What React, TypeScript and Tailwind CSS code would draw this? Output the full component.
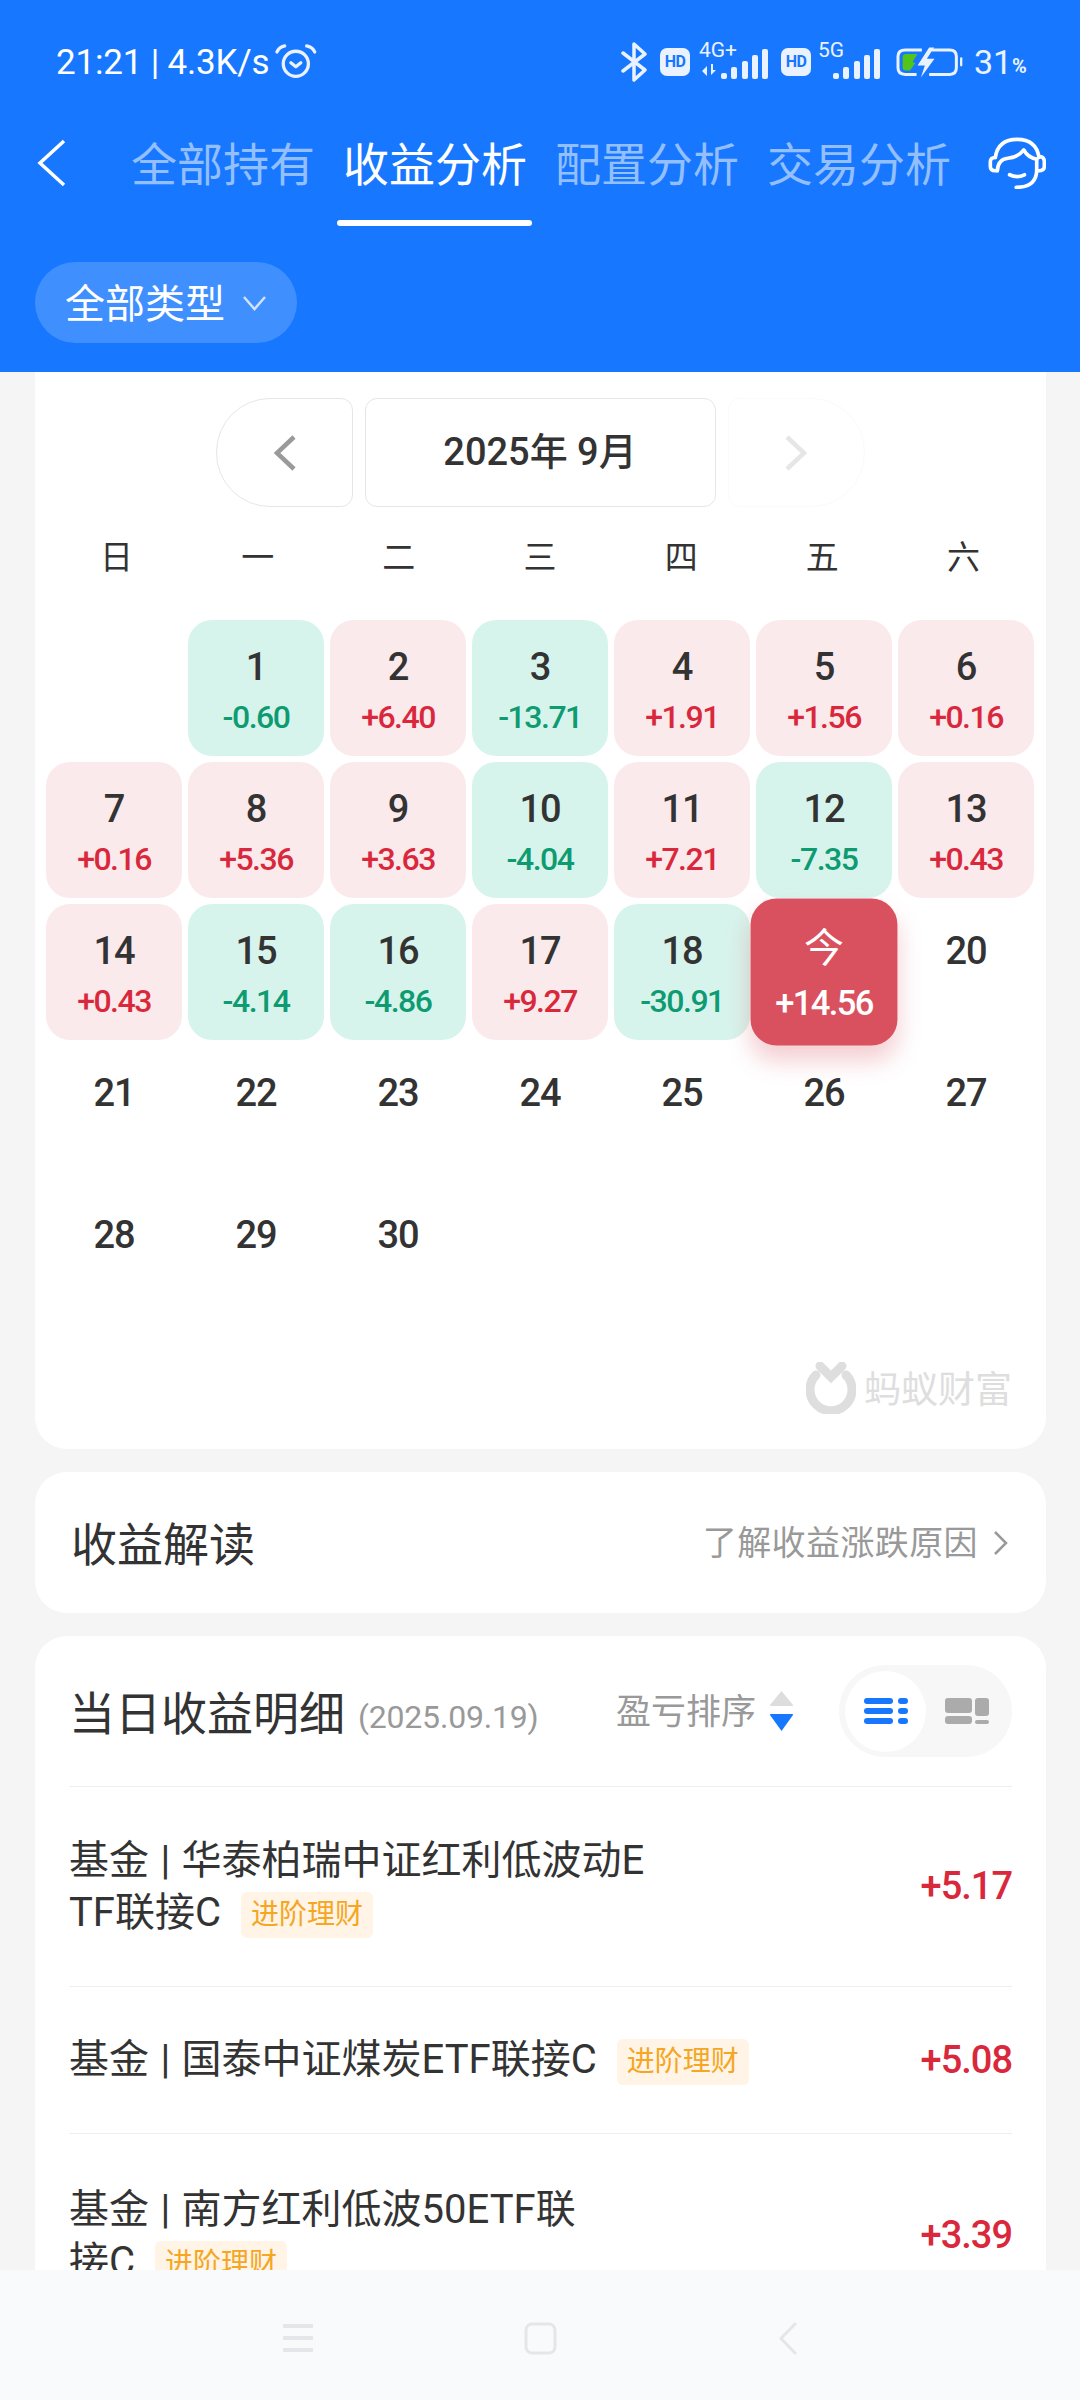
import React from 'react'

type Day = { day: number; value?: string; label?: string }

const days: Day[] = [
  { day: 1, value: '-0.60' },
  { day: 2, value: '+6.40' },
  { day: 3, value: '-13.71' },
  { day: 4, value: '+1.91' },
  { day: 5, value: '+1.56' },
  { day: 6, value: '+0.16' },
  { day: 7, value: '+0.16' },
  { day: 8, value: '+5.36' },
  { day: 9, value: '+3.63' },
  { day: 10, value: '-4.04' },
  { day: 11, value: '+7.21' },
  { day: 12, value: '-7.35' },
  { day: 13, value: '+0.43' },
  { day: 14, value: '+0.43' },
  { day: 15, value: '-4.14' },
  { day: 16, value: '-4.86' },
  { day: 17, value: '+9.27' },
  { day: 18, value: '-30.91' },
  { day: 19, value: '+14.56', label: '今' },
  { day: 20 },
  { day: 21 },
  { day: 22 },
  { day: 23 },
  { day: 24 },
  { day: 25 },
  { day: 26 },
  { day: 27 },
  { day: 28 },
  { day: 29 },
  { day: 30 },
]

function Signal() {
  return (
    <svg width="48" height="32" viewBox="0 0 48 32" fill="#eaf2ff">
      <rect x="0" y="25" width="6" height="6" rx="2" />
      <rect x="10" y="19" width="6" height="12" rx="2" />
      <rect x="21" y="13" width="6" height="18" rx="2" />
      <rect x="31" y="7" width="6" height="24" rx="2" />
      <rect x="41" y="1" width="6" height="30" rx="2" />
    </svg>
  )
}

function HdBadge() {
  return (
    <div className="flex h-[28px] w-[30px] items-center justify-center rounded-[7px] bg-[#eaf2ff] text-[16px] leading-none font-bold tracking-[-0.5px] text-[#1677ff]">
      HD
    </div>
  )
}

function StatusBar() {
  return (
    <div className="flex h-[44px] items-center pr-[55px] pl-[56px] text-white">
      <span className="text-[35px] leading-none tracking-[-0.2px]">21:21 | 4.3K/s</span>
      <svg className="ml-[6px]" width="42" height="37" viewBox="35 28 125 112" fill="none" stroke="#eaf2ff" strokeWidth="10" strokeLinecap="round" strokeLinejoin="round">
        <circle cx="97" cy="88" r="38" />
        <path d="M40 52 Q46 38 63 34 M130 34 Q148 38 154 52" />
        <path d="M82 85 L97 97 L112 85" />
      </svg>
      <svg className="ml-auto" width="26" height="40" viewBox="0 0 26 40" fill="none" stroke="#eaf2ff" strokeWidth="3.5" strokeLinejoin="round" strokeLinecap="round">
        <path d="M2 11 L24 28 L13 38 L13 2 L24 12 L2 29" />
      </svg>
      <div className="ml-[13px]">
        <HdBadge />
      </div>
      <div className="relative ml-[9px] h-[36px] w-[70px]">
        <span className="absolute top-[-5px] left-0 text-[21px] leading-[22px] text-[#eaf2ff]">4G+</span>
        <svg className="absolute bottom-[3px] left-[3px]" width="16" height="13" viewBox="0 0 16 13" fill="#eaf2ff">
          <path d="M0 7 L5 2 V12Z M9 0 V11 L14 6 L11 6 V0Z" />
        </svg>
        <div className="absolute right-0 bottom-0 flex">
          <Signal />
        </div>
      </div>
      <div className="ml-[12px]">
        <HdBadge />
      </div>
      <div className="relative ml-[7px] h-[36px] w-[63px]">
        <span className="absolute top-[-5px] left-0 text-[21px] leading-[22px] text-[#eaf2ff]">5G</span>
        <div className="absolute right-0 bottom-0 flex">
          <Signal />
        </div>
      </div>
      <svg className="ml-[15px]" width="67" height="31" viewBox="50 40 202 92" fill="none">
        <path d="M128 48 H78 Q56 48 56 68 V102 Q56 122 78 122 H112 M157 48 H212 Q232 48 232 68 V102 Q232 122 212 122 H150" stroke="#eaf2ff" strokeWidth="9" />
        <path d="M70 70 Q70 60 80 60 H115 L100 84 L108 88 L92 110 H80 Q70 110 70 100Z" fill="#52c41a" />
        <path d="M150 41 L115 95 H137 L125 131 L166 75 H143 L165 41Z" fill="#eaf2ff" />
        <rect x="243" y="70" width="7" height="28" rx="3.5" fill="#eaf2ff" />
      </svg>
      <span className="ml-[11px] w-[38px] text-[34px] leading-none text-[#eaf2ff]">31</span>
      <span className="mt-[7px] w-[13px] text-[20px] leading-none font-bold tracking-[-1.5px] text-[#eaf2ff]">%</span>
    </div>
  )
}

function HeadsetIcon() {
  return (
    <svg width="58" height="52" viewBox="40 33 175 157" fill="none" stroke="white" strokeWidth="11" strokeLinecap="round" strokeLinejoin="round">
      <path d="M62 95 Q70 40 128 40 Q186 40 194 95" />
      <path d="M62 95 Q47 95 47 108 V122 Q47 135 62 135 H68" />
      <path d="M68 135 Q70 100 100 97 Q130 95 148 72 Q160 95 187 100" />
      <path d="M194 92 Q210 92 210 108 V122 Q210 135 194 135 H187 V100" />
      <path d="M187 135 Q185 185 125 185" />
      <path d="M105 147 Q128 158 150 147" />
    </svg>
  )
}

function Header() {
  return (
    <header className="flex-none bg-[#1778ff] pt-[40px] pb-[29px]">
      <StatusBar />
      <div className="mt-[35px] flex h-[88px] items-center pr-[34px] pl-[37px]">
        <svg width="29" height="48" viewBox="0 0 29 48" fill="none" stroke="white" strokeWidth="3.5">
          <path d="M27 2 L3 24 L27 46" />
        </svg>
        <div className="ml-[65px] flex gap-[28px] pt-[3px] text-[46px] leading-[88px] text-[#93bfff]">
          <span>全部持有</span>
          <span className="relative text-white">
            收益分析
            <span className="absolute top-[99px] left-[-6px] h-[6px] w-[195px] rounded-full bg-white" />
          </span>
          <span>配置分析</span>
          <span>交易分析</span>
        </div>
        <div className="ml-auto">
          <HeadsetIcon />
        </div>
      </div>
      <div className="mt-[55px] ml-[35px] flex h-[81px] w-[262px] items-center rounded-full bg-[#408fff] pl-[30px] text-white">
        <span className="pt-[5px] text-[40px] leading-none">全部类型</span>
        <svg className="ml-[17px]" width="25" height="16" viewBox="0 0 25 16" fill="none" stroke="#cfe2ff" strokeWidth="2.5">
          <path d="M2 2 L12.5 14 L23 2" />
        </svg>
      </div>
    </header>
  )
}

function DayCell({ item }: { item: Day }) {
  if (item.label) {
    return (
      <div className="relative flex h-[136px] scale-[1.08] flex-col items-center rounded-[24px] bg-[#d9505e] pt-[26px] text-white shadow-[0_14px_22px_rgba(217,80,94,0.28)]">
        <span className="text-[37px] leading-[42px]">{item.label}</span>
        <span className="mt-[12px] text-[32px] leading-[34px] font-medium tracking-[-1.5px]">{item.value}</span>
      </div>
    )
  }
  const up = item.value?.startsWith('+')
  const down = item.value?.startsWith('-')
  return (
    <div
      className={`flex h-[136px] flex-col items-center rounded-[24px] pt-[26px] ${
        up ? 'bg-[#fbeaec]' : down ? 'bg-[#d7f4ec]' : ''
      }`}
    >
      <span className="text-[38px] leading-[42px] font-medium tracking-[-1px] text-[#333333]">{item.day}</span>
      {item.value && (
        <span className={`mt-[12px] text-[32px] leading-[34px] font-medium tracking-[-1.5px] ${up ? 'text-[#d9283c]' : 'text-[#0f9b72]'}`}>
          {item.value}
        </span>
      )}
    </div>
  )
}

function CalendarCard() {
  return (
    <section className="rounded-b-[32px] bg-white pt-[26px] pr-[12px] pb-[35px] pl-[11px]">
      <div className="flex justify-center gap-[12px]">
        <button className="flex h-[109px] w-[137px] items-center justify-center rounded-l-[54px] rounded-r-[12px] border border-[#e6e6e6]">
          <svg width="23" height="36" viewBox="0 0 23 36" fill="none" stroke="#9a9a9a" strokeWidth="4.5">
            <path d="M21 2 L4 18 L21 34" />
          </svg>
        </button>
        <div className="flex h-[109px] w-[351px] items-center justify-center rounded-[12px] border border-[#e6e6e6] text-[38px] font-medium text-[#333333]">
          2025年 9月
        </div>
        <button className="flex h-[109px] w-[137px] items-center justify-center rounded-l-[12px] rounded-r-[54px] border border-[#fafafa]">
          <svg width="23" height="36" viewBox="0 0 23 36" fill="none" stroke="#e6e6e6" strokeWidth="4.5">
            <path d="M2 2 L19 18 L2 34" />
          </svg>
        </button>
      </div>
      <div className="mt-[30px] mb-[41px] grid h-[42px] grid-cols-7 text-center text-[33px] leading-[42px] text-[#333333]">
        {['日', '一', '二', '三', '四', '五', '六'].map((d) => (
          <span key={d}>{d}</span>
        ))}
      </div>
      <div className="grid grid-cols-7 gap-[6px]">
        <div className="h-[136px]" />
        {days.map((item) => (
          <DayCell key={item.day} item={item} />
        ))}
      </div>
      <div className="mt-[38px] mr-[22px] flex items-center justify-end">
        <svg width="50" height="52" viewBox="0 0 50 52" fill="none" stroke="#dedede">
          <path d="M10 13 A21 21 0 1 0 40 13" strokeWidth="9" strokeLinecap="round" />
          <path d="M14 4 L25 15 L36 4" strokeWidth="9" strokeLinecap="round" />
        </svg>
        <span className="ml-[8px] pt-[4px] text-[37px] leading-none text-[#dedede]">蚂蚁财富</span>
      </div>
    </section>
  )
}

function Tag() {
  return (
    <span className="ml-[20px] inline-flex h-[46px] w-[132px] items-center justify-center rounded-[6px] bg-[#fff4e5] align-middle text-[28px] leading-none text-[#f5a623]">
      进阶理财
    </span>
  )
}

function HoldingRow({ height, children, value }: { height: string; children: React.ReactNode; value: string }) {
  return (
    <div className={`flex items-center justify-between border-t border-[#eeeeee] ${height}`}>
      <div className="text-[40px] leading-[52px] text-[#333333]">
        基金 <span className="mx-[1.5px]">|</span> {children}
      </div>
      <span className="text-[38px] font-medium tracking-[-1px] text-[#d9283c]">{value}</span>
    </div>
  )
}

function DetailCard() {
  return (
    <section className="mt-[23px] rounded-t-[32px] bg-white px-[34px]">
      <div className="flex h-[150px] items-center">
        <span className="pt-[5px] text-[46px] leading-none text-[#333333]">当日收益明细</span>
        <span className="mt-[12px] ml-[13px] text-[32px] leading-none tracking-[-0.2px] text-[#999999]">(2025.09.19)</span>
        <span className="ml-auto pt-[2px] text-[35px] leading-none text-[#999999]">盈亏排序</span>
        <svg className="ml-[14px]" width="23" height="40" viewBox="0 0 23 40">
          <path d="M11.5 0 L23 14 Q23.500 15 22 15 H1 Q-0.500 15 0 14Z" fill="#dddddd" />
          <path d="M0 24 Q-0.500 23 1 23 H22 Q23.500 23 23 24 L11.5 40Z" fill="#1778ff" />
        </svg>
        <div className="ml-[46px] flex h-[92px] w-[173px] items-center rounded-full bg-[#f7f7f7] pl-[6px]">
          <div className="flex h-[81px] w-[81px] items-center justify-center rounded-full bg-white">
            <svg width="44" height="27" viewBox="0 0 44 27" fill="#1778ff">
              <rect x="0" y="0" width="29" height="6" rx="3" />
              <rect x="0" y="10" width="29" height="6" rx="3" />
              <rect x="0" y="20" width="29" height="6" rx="3" />
              <rect x="34" y="0" width="10" height="6" rx="3" />
              <rect x="34" y="10" width="10" height="6" rx="3" />
              <rect x="34" y="20" width="10" height="6" rx="3" />
            </svg>
          </div>
          <svg className="ml-[19px]" width="44" height="27" viewBox="0 0 44 27" fill="#ababab">
            <rect x="0" y="0" width="27" height="15" rx="3" />
            <rect x="0" y="18" width="27" height="8" rx="3" />
            <rect x="30" y="0" width="14" height="18" rx="3" />
            <rect x="30" y="22" width="14" height="4" rx="2" />
          </svg>
        </div>
      </div>
      <HoldingRow height="h-[200px]" value="+5.17">
        华泰柏瑞中证红利低波动E
        <br />
        TF联接C
        <Tag />
      </HoldingRow>
      <HoldingRow height="h-[147px]" value="+5.08">
        国泰中证煤炭ETF联接C
        <Tag />
      </HoldingRow>
      <HoldingRow height="h-[204px]" value="+3.39">
        南方红利低波50ETF联
        <br />
        接C
        <Tag />
      </HoldingRow>
    </section>
  )
}

function NavBar() {
  return (
    <nav className="flex h-[130px] flex-none items-center justify-center bg-[#f9fafc] pt-[6px]">
      <svg width="30" height="28" viewBox="0 0 30 28" fill="#e4e6ea">
        <rect x="0" y="0" width="30" height="4" />
        <rect x="0" y="12" width="30" height="4" />
        <rect x="0" y="24" width="30" height="4" />
      </svg>
      <svg className="ml-[211px]" width="33" height="33" viewBox="0 0 33 33" fill="none" stroke="#e4e6ea" strokeWidth="3">
        <rect x="2" y="2" width="29" height="29" rx="6" />
      </svg>
      <svg className="ml-[222px]" width="18" height="33" viewBox="0 0 18 33" fill="none" stroke="#e4e6ea" strokeWidth="3">
        <path d="M17 1 L2 16.5 L17 32" />
      </svg>
    </nav>
  )
}

export default function App() {
  return (
    <div className="flex h-[2400px] w-[1080px] flex-col overflow-hidden bg-[#f5f5f5] font-['Roboto','Noto_Sans_CJK_SC',sans-serif]">
      <Header />
      <main className="min-h-0 flex-1 overflow-hidden pr-[34px] pl-[35px]">
        <CalendarCard />
        <section className="mt-[23px] flex h-[141px] items-center justify-between rounded-[32px] bg-white pr-[38px] pl-[36px]">
          <span className="pt-[5px] text-[46px] leading-none text-[#333333]">收益解读</span>
          <div className="flex items-center">
            <span className="text-[34px] leading-none tracking-[0.4px] text-[#999999]">了解收益涨跌原因</span>
            <svg className="ml-[15px]" width="15" height="26" viewBox="0 0 15 26" fill="none" stroke="#999999" strokeWidth="2.500">
              <path d="M2 2 L13 13 L2 24" />
            </svg>
          </div>
        </section>
        <DetailCard />
      </main>
      <NavBar />
    </div>
  )
}
